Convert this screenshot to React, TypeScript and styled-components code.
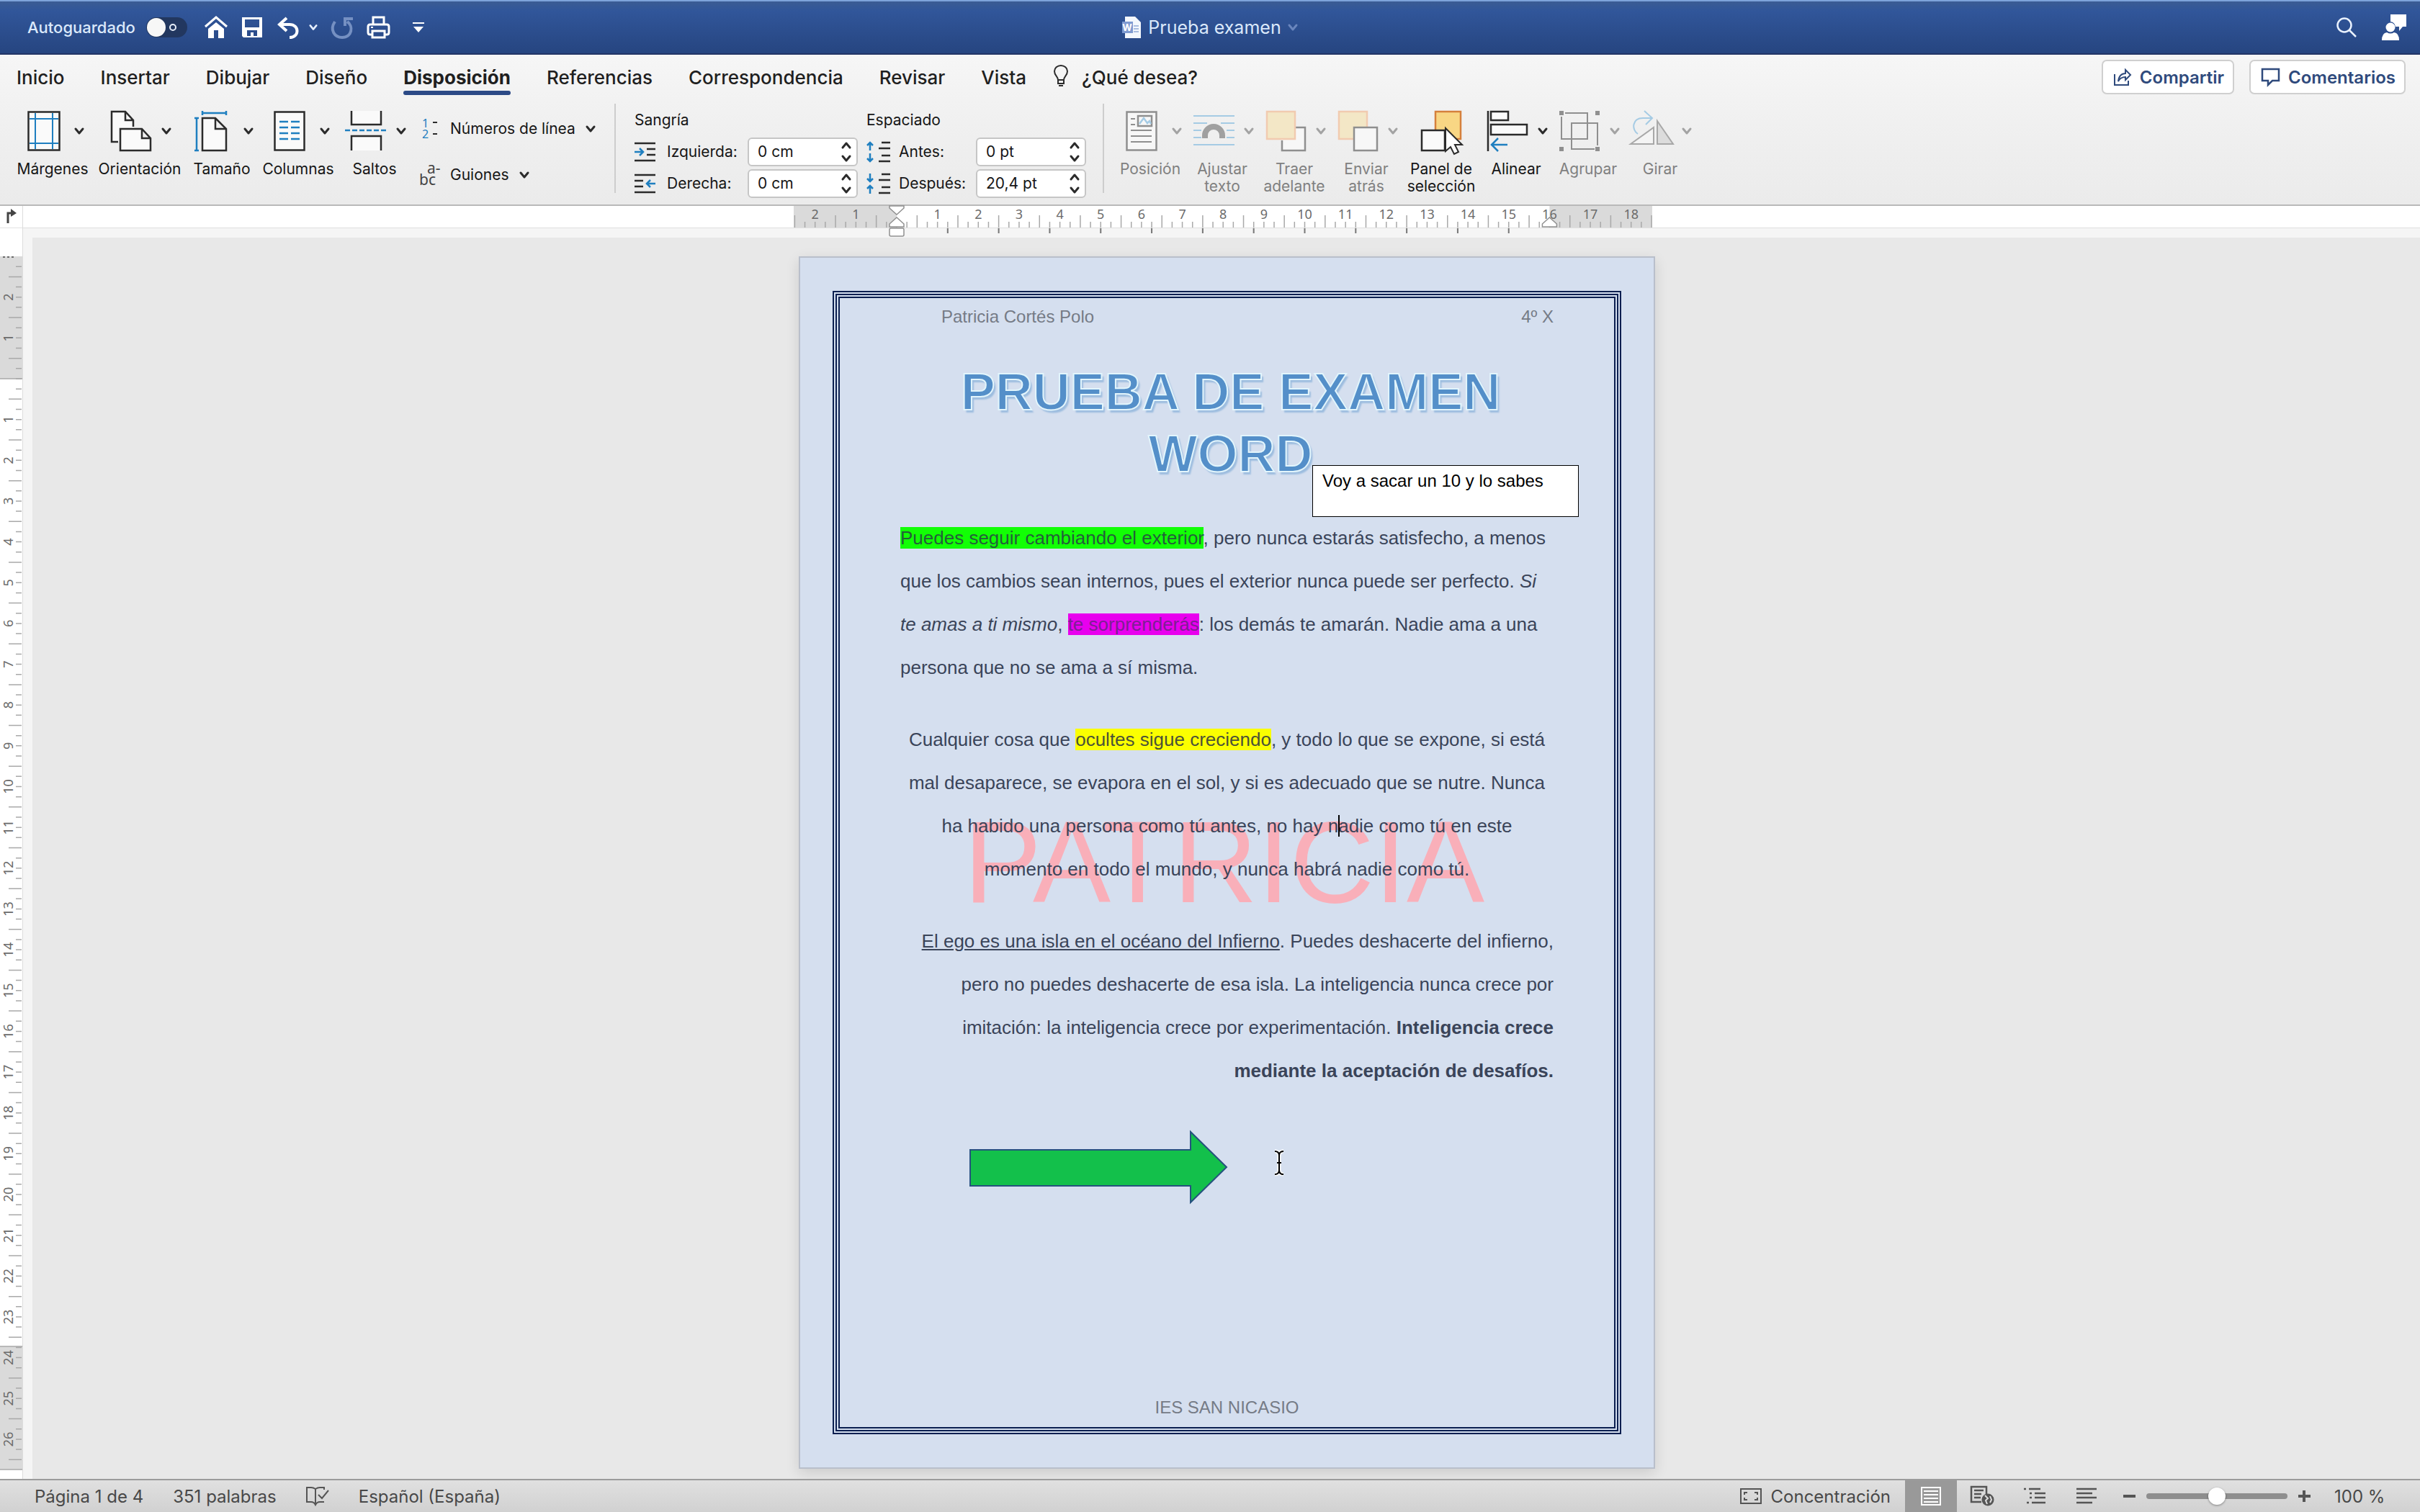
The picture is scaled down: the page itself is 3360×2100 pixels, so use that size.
import React from "react";
import styled, { createGlobalStyle, css } from "styled-components";

const UI = `Inter, "Noto Sans", sans-serif`;
const DOC = `"Liberation Sans", Arial, sans-serif`;
const INK = "#2b2b2b";
const BLUE = "#1f7fc0";
const DIM = "#8f8f8f";
const DIM_BLUE = "#a5cbe4";

const GlobalStyle = createGlobalStyle`
  *, *::before, *::after { box-sizing: border-box; }
  body { margin: 0; background: #e8e8e8; font-family: ${UI}; }
  button, input { font: inherit; color: inherit; }
  button { border: 0; padding: 0; background: none; white-space: nowrap; }
  svg { display: block; flex: none; overflow: visible; }
  h1, h2, p { margin: 0; }
`;

const Window = styled.div`
  display: flex;
  flex-direction: column;
  height: 100vh;
  overflow: hidden;
`;

/* ---------- Title bar ---------- */

const TitleBar = styled.header`
  flex: none;
  display: grid;
  grid-template-columns: 1fr auto 1fr;
  align-items: center;
  height: 76px;
  padding: 0 18px;
  color: #dbe9fb;
  background: linear-gradient(#3b5c93, #31569a 18%, #264580);
  border-top: 2px solid #7da3da;
  border-bottom: 2px solid #233565;
`;

const QuickTools = styled.div`
  display: flex;
  align-items: center;
  gap: 18px;
  padding-left: 20px;
`;

const AutoSave = styled.label`
  display: flex;
  align-items: center;
  gap: 15px;
  margin-right: 6px;
  font-size: 22px;
  line-height: 28px;
  font-weight: 500;
`;

const Switch = styled.input`
  appearance: none;
  position: relative;
  width: 57px;
  height: 28px;
  margin: 0;
  border-radius: 14px;
  background: #22375f;
  &::before {
    content: "";
    position: absolute;
    left: 1px;
    top: 1px;
    width: 26px;
    height: 26px;
    border-radius: 50%;
    background: #f7f7f7;
  }
  &::after {
    content: "";
    position: absolute;
    left: 32px;
    top: 9px;
    width: 10px;
    height: 10px;
    border: 2px solid #e6edf8;
    border-radius: 50%;
  }
`;

const UndoPair = styled.div`
  display: flex;
  align-items: center;
  gap: 13px;
`;

const DocName = styled.button`
  display: flex;
  align-items: center;
  gap: 9px;
  font-size: 25px;
  line-height: 32px;
`;

const TitleRight = styled.div`
  display: flex;
  align-items: center;
  justify-content: flex-end;
  gap: 34px;
`;

/* ---------- Ribbon ---------- */

const Ribbon = styled.section`
  flex: none;
  background: linear-gradient(#f6f6f6, #f0f0f0 45%, #ebebeb);
  border-bottom: 2px solid #b9b9b9;
`;

const TabRow = styled.nav`
  display: flex;
  align-items: center;
  gap: 50px;
  height: 62px;
  padding: 0 20px 0 23px;
`;

const Tab = styled.button<{ $active?: boolean }>`
  position: relative;
  height: 62px;
  font-size: 26px;
  font-weight: ${(p) => (p.$active ? 700 : 500)};
  color: #1f1f1f;
  ${(p) =>
    p.$active &&
    css`
      &::after {
        content: "";
        position: absolute;
        left: 0;
        right: 0;
        bottom: 6px;
        height: 6px;
        border-radius: 3px;
        background: #2c4a86;
      }
    `}
`;

const TellMe = styled(Tab)`
  display: flex;
  align-items: center;
  gap: 19px;
  margin-left: -12px;
`;

const TabActions = styled.div`
  display: flex;
  gap: 21px;
  margin-left: auto;
`;

const ActionButton = styled.button`
  display: flex;
  align-items: center;
  gap: 12px;
  height: 48px;
  padding: 0 12px 0 15px;
  border: 2px solid #cfcfcf;
  border-radius: 7px;
  background: #fff;
  color: #2f4a7c;
  font-size: 24px;
  font-weight: 600;
`;

const ToolRow = styled.div`
  display: flex;
  align-items: flex-start;
  height: 146px;
  padding-left: 13px;
`;

const BigTool = styled.button<{ $w: number; $dim?: boolean }>`
  display: flex;
  flex-direction: column;
  align-items: center;
  width: ${(p) => p.$w}px;
  margin-top: 16px;
  font-size: 21px;
  line-height: 24px;
  color: ${(p) => (p.$dim ? "#808080" : "#161616")};
`;

const BigIcon = styled.span<{ $menu?: boolean }>`
  display: grid;
  grid-template-columns: ${(p) => (p.$menu ? "60px 14px" : "60px")};
  column-gap: 12px;
  align-items: center;
  justify-items: center;
  height: 56px;
  margin-bottom: 13px;
  padding-left: 2px;
`;

const SmallTools = styled.div`
  display: flex;
  flex-direction: column;
  align-items: flex-start;
  gap: 36px;
  width: 280px;
  padding: 27px 0 0 9px;
`;

const SmallTool = styled.button`
  display: flex;
  align-items: center;
  gap: 14px;
  font-size: 21px;
  line-height: 28px;
  color: #161616;
`;

const Separator = styled.div`
  width: 2px;
  height: 124px;
  margin-top: 6px;
  background: #cdcdcd;
`;

const Measures = styled.div`
  display: flex;
  gap: 12px;
  padding: 17px 23px 0 26px;
  font-size: 21px;
  line-height: 24px;
  color: #161616;
`;

const MeasureGroup = styled.fieldset`
  margin: 0;
  padding: 0;
  border: 0;
  min-width: 0;
`;

const MeasureTitle = styled.legend`
  padding: 0;
  margin-bottom: 12px;
`;

const MeasureRow = styled.div<{ $label: number }>`
  display: grid;
  grid-template-columns: 29px ${(p) => p.$label}px 153px;
  column-gap: 16px;
  align-items: center;
  margin-bottom: 4px;
`;

const Spin = styled.div`
  display: flex;
  height: 40px;
  border: 2px solid #c6c6c6;
  border-radius: 6px;
  background: #fff;
`;

const SpinInput = styled.input`
  flex: 1;
  min-width: 0;
  padding: 0 0 0 12px;
  border: 0;
  background: none;
  outline: 0;
`;

const SpinButtons = styled.div`
  display: flex;
  flex-direction: column;
  width: 21px;
  button {
    flex: 1;
    display: flex;
    align-items: center;
  }
`;

const Arrange = styled.div`
  display: flex;
  align-items: flex-start;
  padding-left: 14px;
`;

/* ---------- Workspace ---------- */

const Workspace = styled.main`
  flex: 1;
  display: flex;
  min-height: 0;
`;

const RulerColumn = styled.div`
  flex: none;
  display: flex;
  flex-direction: column;
  width: 32px;
  background: #fff;
  border-right: 1px solid #dcdcdc;
`;

const Corner = styled.div`
  flex: none;
  display: flex;
  justify-content: center;
  height: 31px;
  padding-top: 4px;
  border-bottom: 1px solid #e2e2e2;
`;

const SideRuler = styled.svg`
  flex: 1;
  width: 31px;
  min-height: 0;
  overflow: hidden;
`;

const Stage = styled.div`
  flex: 1;
  display: flex;
  flex-direction: column;
  min-width: 0;
`;

const TopRuler = styled.div`
  flex: none;
  display: flex;
  justify-content: center;
  height: 44px;
  padding-left: 4px;
  background: linear-gradient(#fff 30px, #e0e0e0 30px, #e0e0e0 31px, #f5f5f5 31px);
`;

const Canvas = styled.div`
  flex: 1;
  display: flex;
  justify-content: center;
  align-items: flex-start;
  min-height: 0;
  padding: 26px 0 0 2px;
  overflow: hidden;
  border-left: 13px solid #f5f5f5;
  background: #e8e8e8;
`;

const Page = styled.article`
  position: relative;
  display: flex;
  flex: none;
  width: 1189px;
  min-height: 1684px;
  padding: 46px 45px;
  border: 2px solid #b9bfcb;
  background: #d5dfef;
  box-shadow: 0 6px 18px rgba(0, 0, 0, 0.12);
  font-family: ${DOC};
`;

const Frame = styled.div`
  flex: 1;
  display: flex;
  flex-direction: column;
  padding: 20px 92px 21px;
  border: 2px solid #0b1f50;
  box-shadow: inset 0 0 0 2px #d5dfef, inset 0 0 0 4px #0b1f50, inset 0 0 0 6px #d5dfef,
    inset 0 0 0 8px #0b1f50;
`;

const RunningHead = styled.div`
  display: flex;
  justify-content: space-between;
  padding-left: 57px;
  font-size: 24px;
  line-height: 28px;
  color: #757b86;
`;

const RunningFoot = styled(RunningHead)`
  justify-content: center;
  margin-top: auto;
  padding-left: 0;
`;

const WordArt = styled.h1`
  margin: 47px 0 44px;
  padding-left: 10px;
  text-align: center;
  font-size: 72px;
  line-height: 86px;
  font-weight: 700;
  color: #548fc9;
  -webkit-text-stroke: 2px #e2f5fc;
  text-shadow: 3px 4px 2px #9dbddf;
`;

const Copy = styled.div`
  position: relative;
  display: flex;
  flex-direction: column;
  gap: 40px;
  font-size: 26px;
  line-height: 60px;
  color: #3a4459;
`;

const Paragraph = styled.p<{ $align: "left" | "center" | "right" }>`
  position: relative;
  text-align: ${(p) => p.$align};
`;

const Mark = styled.mark<{ $bg: string; $ink: string }>`
  background: ${(p) => p.$bg};
  color: ${(p) => p.$ink};
`;

const Caret = styled.span`
  position: relative;
  &::before {
    content: "";
    position: absolute;
    left: 0;
    top: 0;
    width: 2px;
    height: 30px;
    background: #000;
  }
`;

const Watermark = styled.div`
  position: absolute;
  left: 0;
  right: 0;
  top: 380px;
  display: flex;
  justify-content: center;
  padding-right: 8px;
  font-size: 162px;
  line-height: 200px;
  color: #f9afb9;
`;

const Note = styled.aside`
  position: absolute;
  left: 711px;
  top: 288px;
  width: 370px;
  height: 72px;
  padding: 6px 13px;
  border: 1px solid #000;
  background: #fff;
  color: #000;
  font-size: 24px;
  line-height: 30px;
`;

const Arrow = styled.svg`
  margin: 52px 0 0 96px;
`;

const Pointer = styled.svg`
  position: absolute;
  left: 657px;
  top: 1240px;
`;

/* ---------- Status bar ---------- */

const StatusBar = styled.footer`
  flex: none;
  display: flex;
  align-items: stretch;
  justify-content: space-between;
  height: 46px;
  padding: 0 48px;
  border-top: 2px solid #9b9b9b;
  background: linear-gradient(#e0e0e0, #d1d1d1);
  color: #484848;
  font-size: 24px;
`;

const StatusLeft = styled.div`
  display: flex;
  align-items: center;
  gap: 41px;
`;

const StatusRight = styled.div`
  display: flex;
  align-items: stretch;
`;

const Focus = styled.button`
  display: flex;
  align-items: center;
  gap: 13px;
  margin-right: 20px;
`;

const ViewButton = styled.button<{ $active?: boolean }>`
  display: flex;
  align-items: center;
  justify-content: center;
  width: 72px;
  background: ${(p) => (p.$active ? "#999" : "none")};
`;

const Zoom = styled.div`
  display: flex;
  align-items: center;
  gap: 15px;
  padding-left: 15px;
`;

const ZoomRange = styled.input`
  appearance: none;
  width: 196px;
  height: 8px;
  margin: 0;
  border-radius: 4px;
  background: #8e8e8e;
  &::-webkit-slider-thumb {
    appearance: none;
    width: 24px;
    height: 24px;
    border-radius: 50%;
    background: #fff;
    box-shadow: 0 1px 3px rgba(0, 0, 0, 0.4);
  }
`;

const ZoomValue = styled.output`
  width: 71px;
  margin-left: 18px;
  white-space: nowrap;
`;

/* ---------- Icons ---------- */

const Chevron = ({ color = INK, up = false, w = 14 }: { color?: string; up?: boolean; w?: number }) => (
  <svg width={w} height="10" viewBox="0 0 14 10" fill="none" stroke={color} strokeWidth="3" strokeLinecap="round" strokeLinejoin="round">
    <path d={up ? "M2 8L7 2l5 6" : "M2 2l5 6 5-6"} />
  </svg>
);

const Draw = ({ w, h = 56, color = INK, sw = 2.5, children }: { w: number; h?: number; color?: string; sw?: number; children: React.ReactNode }) => (
  <svg width={w} height={h} viewBox={`0 0 ${w} ${h}`} fill="none" stroke={color} strokeWidth={sw}>
    {children}
  </svg>
);

const MarginsIcon = () => (
  <Draw w={46}>
    <rect x="1.5" y="1.5" width="43" height="53" fill="#fafafa" />
    <path stroke={BLUE} strokeWidth="2" d="M11 3v50M35 3v50M3 11h40M3 45h40" />
  </Draw>
);
const OrientationIcon = () => (
  <Draw w={56}>
    <path fill="#fafafa" d="M9 43H1V1h19l11 12v12H13v18z" stroke="none" />
    <path d="M10 43H1V1h19l11 12v9M20 1v12h11" />
    <path fill="#fafafa" d="M13 25h30l12 13v17H13zM43 25v13h12" />
  </Draw>
);
const SizeIcon = () => (
  <Draw w={53}>
    <path stroke={BLUE} d="M11 3h33M11 0v6M44 0v6M3 10v45M0 10h6M0 55h6" />
    <path fill="#fafafa" d="M11 10h18l15 15v30H11zM29 10v15h15" />
  </Draw>
);
const ColumnsIcon = () => (
  <Draw w={44}>
    <rect x="1.5" y="1.5" width="41" height="53" fill="#fafafa" />
    <path stroke={BLUE} d="M8 15h12M24 15h12M8 23h12M24 23h12M8 31h12M24 31h12M8 39h12M24 39h12" />
  </Draw>
);
const BreaksIcon = () => (
  <Draw w={58}>
    <path fill="#fafafa" d="M9 0v19h41V0M9 55V35h41v20" />
    <path stroke={BLUE} strokeDasharray="7 3" d="M0 27h58" />
  </Draw>
);
const LineNumbersIcon = () => (
  <svg width="29" height="28" viewBox="0 0 29 28">
    <text x="4" y="12" fontSize="16" fontFamily="Noto Sans, sans-serif" fill={BLUE}>1</text>
    <text x="4" y="27" fontSize="16" fontFamily="Noto Sans, sans-serif" fill={BLUE}>2</text>
    <path d="M19 5h6M19 21h6" stroke={INK} strokeWidth="2" />
  </svg>
);
const HyphenIcon = () => (
  <svg width="29" height="28" viewBox="0 0 29 28" fontSize="21" fontFamily="Noto Sans, sans-serif" fill="#444">
    <text x="11" y="12">a-</text>
    <text x="0" y="28">bc</text>
  </svg>
);
const IndentIcon = ({ right }: { right?: boolean }) => (
  <Draw w={29} h={26}>
    <path d={right ? "M0 1h29M0 9h12M0 17h12M0 25h29" : "M0 1h29M17 9h12M17 17h12M0 25h29"} />
    <path stroke={BLUE} d={right ? "M29 13H17M22 8l-5 5 5 5" : "M0 13h12M7 8l5 5-5 5"} />
  </Draw>
);
const SpacingIcon = ({ after }: { after?: boolean }) => (
  <Draw w={33} h={28}>
    <path d="M21 1h12M17 9h16M21 19h12M17 27h16" />
    <path stroke={BLUE} d={after ? "M5 0v11M1 7l4 4 4-4M5 28V17M1 21l4-4 4 4" : "M5 12V1M1 5l4-4 4 4M5 16v11M1 23l4 4 4-4"} />
  </Draw>
);
const PositionIcon = () => (
  <Draw w={44} color={DIM}>
    <rect x="1.5" y="1.5" width="41" height="53" fill="#f7f7f7" />
    <path strokeWidth="2" d="M7 11h6M7 19h6M7 27h29M7 35h29M7 43h29" />
    <rect x="17" y="7" width="19" height="14" />
    <path stroke={DIM_BLUE} d="M19 18l6-8 5 7 3-3 2 4" />
  </Draw>
);
const WrapIcon = () => (
  <Draw w={57} color={DIM_BLUE}>
    <path strokeWidth="2" d="M0 7h57M0 17h19M38 17h19M0 27h11M46 27h11M0 37h11M46 37h11M0 47h57" />
    <path stroke="#a0a0a0" strokeWidth="8" d="M16 38v-4a12 12 0 0 1 24 0v4" />
  </Draw>
);
const ForwardIcon = () => (
  <Draw w={55} color={DIM}>
    <path fill="#f7f7f7" d="M41 23h13v32H22V41" />
    <rect x="1" y="1" width="39" height="38" fill="#f3e7c6" stroke="#f1cbb0" />
  </Draw>
);
const BackwardIcon = () => (
  <Draw w={55} color={DIM}>
    <rect x="1" y="1" width="39" height="38" fill="#f3e7c6" stroke="#f1cbb0" />
    <rect x="22" y="23" width="32" height="32" fill="#f7f7f7" />
  </Draw>
);
const PaneIcon = () => (
  <Draw w={58}>
    <rect x="20" y="1" width="35" height="38" fill="#f8d684" stroke="#d5803c" />
    <rect x="1" y="27" width="32" height="28" fill="#fafafa" />
    <path fill="#fff" strokeWidth="2" d="M34 24v32l7-6 5 10 6-3-5-10h10z" />
  </Draw>
);
const AlignIcon = () => (
  <Draw w={56}>
    <path d="M1 0v56M5 1h24v12H5zM5 19h50v14H5z" fill="#fafafa" />
    <path stroke={BLUE} d="M28 47H6M15 38l-9 9 9 9" />
  </Draw>
);
const GroupIcon = () => (
  <Draw w={56} color={DIM} sw={2}>
    <path d="M3 8v31h36V8M8 3h31v5M17 48V17h36v31M17 48v5h32" />
    <path fill={DIM} stroke="none" d="M0 0h6v6H0zM50 0h6v6h-6zM0 50h6v6H0zM50 50h6v6h-6z" />
  </Draw>
);
const RotateIcon = () => (
  <Draw w={61} color="#a8a8a8" sw={2}>
    <path d="M1 46L33 23v23z" fill="#f4f4f4" />
    <path d="M38 14l22 32H38z" fill="#dcdcdc" />
    <path stroke={DIM_BLUE} d="M11 32C2 26 3 10 18 10h13M20 0l11 10-9 9" />
  </Draw>
);

const HomeIcon = () => (
  <svg width="32" height="32" viewBox="0 0 32 32" fill="#fff">
    <path d="M1 15L16 2l15 13" fill="none" stroke="#fff" strokeWidth="3" />
    <path d="M5 18L16 9l11 9v13h-8V20h-6v11H5z" />
  </svg>
);
const SaveIcon = () => (
  <svg width="32" height="32" viewBox="0 0 32 32">
    <path fill="#fff" fillRule="evenodd" d="M2 2h28v28H4l-2-2zM6 5v11h20V5zM9 20v8h5v-5h4v5h5v-8z" />
  </svg>
);
const UndoIcon = () => (
  <svg width="32" height="32" viewBox="0 0 32 32" fill="none" stroke="#fff" strokeWidth="4">
    <path d="M14 3L4 12l10 9M5 12h13c14 0 14 18 0 18" />
  </svg>
);
const RedoIcon = () => (
  <svg width="32" height="32" viewBox="0 0 32 32" fill="none" stroke="#7590c2" strokeWidth="4">
    <path d="M6 8c-8 12 0 22 10 22 14 0 16-16 7-22M20 14V4h11" />
  </svg>
);
const PrintIcon = () => (
  <svg width="33" height="32" viewBox="0 0 33 32" fill="none" stroke="#fff" strokeWidth="3">
    <path d="M9 12V2h15v10M8 26H5q-3 0-3-3v-8q0-3 3-3h23q3 0 3 3v8q0 3-3 3h-3M8 21h17v9H8z" />
    <path d="M6 16h3" strokeWidth="2" />
  </svg>
);
const CustomizeIcon = () => (
  <svg width="16" height="16" viewBox="0 0 16 16" fill="#fff">
    <path d="M0 1h16v2H0zM1 7h14l-7 8z" />
  </svg>
);
const WordFileIcon = () => (
  <svg width="27" height="30" viewBox="0 0 27 30">
    <path fill="#f4f8fd" d="M4 0h14l8 8v22H4z" />
    <path stroke="#a9bde0" strokeWidth="2" d="M16 13h7M16 17h7M16 21h7" />
    <rect x="0" y="7" width="15" height="16" fill="#7f9bd1" />
    <text x="7" y="20" textAnchor="middle" fontSize="13" fontWeight="700" fontFamily="Inter, sans-serif" fill="#fff">W</text>
  </svg>
);
const SearchIcon = () => (
  <svg width="28" height="28" viewBox="0 0 28 28" fill="none" stroke="#eaf2ff" strokeWidth="2.5">
    <circle cx="11" cy="11" r="9.5" />
    <path d="M18 18l9 9" />
  </svg>
);
const PersonIcon = () => (
  <svg width="36" height="36" viewBox="0 0 36 36" fill="#fff">
    <path d="M13 0h22v17h-5l-5 6v-6h-5q-1-6-7-7z" />
    <circle cx="13" cy="18" r="6.5" />
    <path d="M1 36q0-10 7-11 5 3 10 0 7 1 7 11z" />
  </svg>
);
const BulbIcon = () => (
  <svg width="20" height="34" viewBox="0 0 20 34" fill="none" stroke={INK} strokeWidth="2">
    <path d="M6 21c0-5-5-6-5-12a9 8 0 0 1 18 0c0 6-5 7-5 12zM6 21v5h8v-5M7 29h6" />
  </svg>
);
const ShareIcon = () => (
  <Draw w={24} h={24} color="#2f4a7c">
    <path strokeWidth="2" d="M1 8v15h19v-6M6 18c1-8 5-11 10-11V2l7 7-7 7v-4c-5 0-8 2-10 6z" />
  </Draw>
);
const CommentIcon = () => (
  <Draw w={25} h={24} color="#2f4a7c">
    <path d="M1 1h23v16h-9l-6 6v-6H1z" />
  </Draw>
);
const ProofIcon = () => (
  <Draw w={32} h={27} color="#555" sw={2}>
    <path d="M13 3v20M13 3q-3-2-6-2H1v20h6q4 0 6 4 2-4 6-4h6M13 3q3-2 6-2h6v3M17 11l5 5 9-11" />
  </Draw>
);
const FocusIcon = () => (
  <Draw w={30} h={22} color="#555">
    <path d="M1 1h28v20H1zM6 9V6h4M20 6h4v3M24 13v3h-4M10 16H6v-3" strokeWidth="2" />
  </Draw>
);
const PrintViewIcon = () => (
  <Draw w={28} h={26} color="#fff">
    <path d="M1 1h26v24H1zM4 6h20M4 11h20M4 16h20M4 21h20" strokeWidth="2" />
  </Draw>
);
const WebViewIcon = () => (
  <Draw w={34} h={28} color="#555">
    <path strokeWidth="2.5" d="M15 22H1V1h21v10M5 6h13M5 11h10M5 16h9" />
    <circle cx="24" cy="19" r="8.5" fill="#555" stroke="none" />
    <path stroke="#ddd" strokeWidth="2" d="M20 13l4 4-3 3 2 5M27 14l2 5-2 4" />
  </Draw>
);
const OutlineIcon = () => (
  <Draw w={30} h={24} color="#555">
    <path d="M0 2h3M7 2h16M8 8h3M15 8h15M8 14h3M15 14h15M4 21h3M11 21h19" />
  </Draw>
);
const DraftIcon = () => (
  <Draw w={28} h={24} color="#555">
    <path d="M0 2h28M0 8h22M0 14h28M0 21h22" />
  </Draw>
);

/* ---------- Rulers ---------- */

const CM = 56.65;
const range = (from: number, to: number) => Array.from({ length: to - from + 1 }, (_, i) => from + i);

const HorizontalRuler = () => {
  const zero = 143;
  const end = zero + 16 * CM;
  return (
    <svg width="1192" height="44" fontFamily="Noto Sans, sans-serif" fontSize="18" fill="#6b6b6b" textAnchor="middle">
      <rect x="0" y="0" width={zero} height="30" fill="#dadada" />
      <rect x={end} y="0" width={1192 - end} height="30" fill="#dadada" />
      <path
        stroke="#a9a9a9"
        strokeWidth="1.5"
        d={range(-10, 74)
          .map((q) => `M${zero + (q * CM) / 4} ${Math.abs(q) % 4 === 2 ? 13 : 22}V30`)
          .join("")}
      />
      <path stroke="#777" strokeWidth="2" d={range(1, 12).map((n) => `M${zero + n * 1.25 * CM} 31v7`).join("")} />
      {range(-2, 18)
        .filter((n) => n !== 0)
        .map((n) => (
          <text key={n} x={zero + n * CM} y="18">
            {Math.abs(n)}
          </text>
        ))}
      <g fill="#fff" stroke="#909090" strokeWidth="1.5">
        <path d={`M${zero - 10} 0h20v3l-10 9-10-9z`} />
        <path d={`M${zero - 10} 29v-4l10-9 10 9v4z`} />
        <rect x={zero - 10} y="31" width="20" height="11" rx="2" />
        <path d={`M${end - 10} 29v-4l10-9 10 9v4z`} />
      </g>
    </svg>
  );
};

const VerticalRuler = () => {
  const zero = 209;
  return (
    <SideRuler fontFamily="Noto Sans, sans-serif" fontSize="18" fill="#6b6b6b" textAnchor="middle">
      <rect x="0" y="39" width="31" height="170" fill="#dadada" />
      <rect x="0" y="1553" width="31" height="171" fill="#dadada" />
      <path stroke="#a9a9a9" strokeWidth="1.5" d="M0 209h31M0 1553h31M0 1724h31" />
      <path
        stroke="#a9a9a9"
        strokeWidth="1.5"
        d={range(-11, 106)
          .map((q) => `M${Math.abs(q) % 4 === 2 ? 12 : 22} ${zero + (q * CM) / 4}H30`)
          .join("")}
      />
      {range(-2, 26)
        .filter((n) => n !== 0)
        .map((n) => (
          <text key={n} transform={`translate(18 ${zero + n * CM}) rotate(-90)`}>
            {Math.abs(n)}
          </text>
        ))}
      <path d="M4 40h15" stroke="#6b6b6b" strokeWidth="2" strokeDasharray="3 3" />
    </SideRuler>
  );
};

/* ---------- Pieces ---------- */

type ToolProps = { icon: React.ReactNode; lines: string[]; w: number; dim?: boolean; menu?: boolean };

const Tool = ({ icon, lines, w, dim, menu = true }: ToolProps) => (
  <BigTool $w={w} $dim={dim}>
    <BigIcon $menu={menu}>
      {icon}
      {menu && <Chevron color={dim ? "#a3a3a3" : INK} />}
    </BigIcon>
    {lines.map((line) => (
      <span key={line}>{line}</span>
    ))}
  </BigTool>
);

type FieldProps = { id: string; icon: React.ReactNode; label: string; value: string; labelWidth: number };

const Field = ({ id, icon, label, value, labelWidth }: FieldProps) => (
  <MeasureRow $label={labelWidth}>
    {icon}
    <label htmlFor={id}>{label}</label>
    <Spin>
      <SpinInput id={id} defaultValue={value} />
      <SpinButtons>
        <button aria-label="Aumentar"><Chevron up /></button>
        <button aria-label="Reducir"><Chevron /></button>
      </SpinButtons>
    </Spin>
  </MeasureRow>
);

const leftTools: ToolProps[] = [
  { icon: <MarginsIcon />, lines: ["Márgenes"], w: 120 },
  { icon: <OrientationIcon />, lines: ["Orientación"], w: 122 },
  { icon: <SizeIcon />, lines: ["Tamaño"], w: 106 },
  { icon: <ColumnsIcon />, lines: ["Columnas"], w: 106 },
  { icon: <BreaksIcon />, lines: ["Saltos"], w: 106 },
];

const arrangeTools: ToolProps[] = [
  { icon: <PositionIcon />, lines: ["Posición"], w: 100, dim: true },
  { icon: <WrapIcon />, lines: ["Ajustar", "texto"], w: 100, dim: true },
  { icon: <ForwardIcon />, lines: ["Traer", "adelante"], w: 100, dim: true },
  { icon: <BackwardIcon />, lines: ["Enviar", "atrás"], w: 100, dim: true },
  { icon: <PaneIcon />, lines: ["Panel de", "selección"], w: 108, menu: false },
  { icon: <AlignIcon />, lines: ["Alinear"], w: 100 },
  { icon: <GroupIcon />, lines: ["Agrupar"], w: 100, dim: true },
  { icon: <RotateIcon />, lines: ["Girar"], w: 100, dim: true },
];

const tabs = ["Inicio", "Insertar", "Dibujar", "Diseño", "Disposición", "Referencias", "Correspondencia", "Revisar", "Vista"];

export default function App() {
  return (
    <Window>
      <GlobalStyle />
      <TitleBar>
        <QuickTools>
          <AutoSave>
            Autoguardado
            <Switch type="checkbox" role="switch" />
          </AutoSave>
          <button aria-label="Inicio"><HomeIcon /></button>
          <button aria-label="Guardar"><SaveIcon /></button>
          <UndoPair>
            <button aria-label="Deshacer"><UndoIcon /></button>
            <button aria-label="Opciones de deshacer"><Chevron color="#e6efff" w={12} /></button>
          </UndoPair>
          <button aria-label="Rehacer"><RedoIcon /></button>
          <button aria-label="Imprimir"><PrintIcon /></button>
          <UndoPair>
            <span />
            <button aria-label="Personalizar"><CustomizeIcon /></button>
          </UndoPair>
        </QuickTools>
        <DocName>
          <WordFileIcon />
          Prueba examen
          <Chevron color="#6a86bd" />
        </DocName>
        <TitleRight>
          <button aria-label="Buscar"><SearchIcon /></button>
          <button aria-label="Cuenta"><PersonIcon /></button>
        </TitleRight>
      </TitleBar>

      <Ribbon>
        <TabRow>
          {tabs.map((t) => (
            <Tab key={t} $active={t === "Disposición"}>{t}</Tab>
          ))}
          <TellMe>
            <BulbIcon />
            ¿Qué desea?
          </TellMe>
          <TabActions>
            <ActionButton><ShareIcon />Compartir</ActionButton>
            <ActionButton><CommentIcon />Comentarios</ActionButton>
          </TabActions>
        </TabRow>
        <ToolRow>
          {leftTools.map((t) => (
            <Tool key={t.lines[0]} {...t} />
          ))}
          <SmallTools>
            <SmallTool><LineNumbersIcon />Números de línea<Chevron /></SmallTool>
            <SmallTool><HyphenIcon />Guiones<Chevron /></SmallTool>
          </SmallTools>
          <Separator />
          <Measures>
            <MeasureGroup>
              <MeasureTitle>Sangría</MeasureTitle>
              <Field id="left" icon={<IndentIcon />} label="Izquierda:" value="0 cm" labelWidth={96} />
              <Field id="right" icon={<IndentIcon right />} label="Derecha:" value="0 cm" labelWidth={96} />
            </MeasureGroup>
            <MeasureGroup>
              <MeasureTitle>Espaciado</MeasureTitle>
              <Field id="before" icon={<SpacingIcon />} label="Antes:" value="0 pt" labelWidth={91} />
              <Field id="after" icon={<SpacingIcon after />} label="Después:" value="20,4 pt" labelWidth={91} />
            </MeasureGroup>
          </Measures>
          <Separator />
          <Arrange>
            {arrangeTools.map((t) => (
              <Tool key={t.lines[0]} {...t} />
            ))}
          </Arrange>
        </ToolRow>
      </Ribbon>

      <Workspace>
        <RulerColumn>
          <Corner>
            <svg width="14" height="20" viewBox="0 0 14 20">
              <path d="M2 20V6h7" fill="none" stroke="#444" strokeWidth="3" />
              <path d="M6 0l8 6-8 5z" fill="#444" />
            </svg>
          </Corner>
          <VerticalRuler />
        </RulerColumn>
        <Stage>
          <TopRuler>
            <HorizontalRuler />
          </TopRuler>
          <Canvas>
            <Page>
              <Frame>
                <RunningHead>
                  <span>Patricia Cortés Polo</span>
                  <span>4º X</span>
                </RunningHead>
                <WordArt>PRUEBA DE EXAMEN WORD</WordArt>
                <Copy>
                  <Watermark aria-hidden="true">PATRICIA</Watermark>
                  <Paragraph $align="left">
                    <Mark $bg="#12ff05" $ink="#23603a">Puedes seguir cambiando el exterior</Mark>, pero nunca
                    estarás satisfecho, a menos que los cambios sean internos, pues el exterior nunca puede ser
                    perfecto. <em>Si te amas a ti mismo</em>,{" "}
                    <Mark $bg="#e800ee" $ink="#7d1f93">te sorprenderás</Mark>: los demás te amarán. Nadie ama a una
                    persona que no se ama a sí misma.
                  </Paragraph>
                  <Paragraph $align="center">
                    Cualquier cosa que <Mark $bg="#fbff00" $ink="#4b5238">ocultes sigue creciendo</Mark>, y todo lo que
                    se expone, si está mal desaparece, se evapora en el sol, y si es adecuado que se nutre. Nunca ha
                    habido una persona como tú antes, no hay n<Caret />adie como tú en este momento en todo el mundo, y
                    nunca habrá nadie como tú.
                  </Paragraph>
                  <Paragraph $align="right">
                    <u>El ego es una isla en el océano del Infierno</u>. Puedes deshacerte del infierno, pero no puedes
                    deshacerte de esa isla. La inteligencia nunca crece por imitación: la inteligencia crece por
                    experimentación. <strong>Inteligencia crece mediante la aceptación de desafíos.</strong>
                  </Paragraph>
                </Copy>
                <Arrow width="358" height="104" viewBox="0 0 358 104">
                  <path d="M1 28h306V3l50 49-50 49V78H1z" fill="#13c04b" stroke="#26527e" strokeWidth="2" />
                </Arrow>
                <RunningFoot>IES SAN NICASIO</RunningFoot>
              </Frame>
              <Note>Voy a sacar un 10 y lo sabes</Note>
              <Pointer width="16" height="34" viewBox="0 0 16 34" fill="none" stroke="#000" strokeWidth="2">
                <path d="M2 1q6 0 6 6v20q0 6-6 6M14 1q-6 0-6 6v20q0 6 6 6M5 17h6" stroke="#fff" strokeWidth="5" />
                <path d="M2 1q6 0 6 6v20q0 6-6 6M14 1q-6 0-6 6v20q0 6 6 6M5 17h6" />
              </Pointer>
            </Page>
          </Canvas>
        </Stage>
      </Workspace>

      <StatusBar>
        <StatusLeft>
          <span>Página 1 de 4</span>
          <span>351 palabras</span>
          <button aria-label="Revisión"><ProofIcon /></button>
          <button>Español (España)</button>
        </StatusLeft>
        <StatusRight>
          <Focus><FocusIcon />Concentración</Focus>
          <ViewButton $active aria-label="Diseño de impresión"><PrintViewIcon /></ViewButton>
          <ViewButton aria-label="Diseño web"><WebViewIcon /></ViewButton>
          <ViewButton aria-label="Esquema"><OutlineIcon /></ViewButton>
          <ViewButton aria-label="Borrador"><DraftIcon /></ViewButton>
          <Zoom>
            <button aria-label="Alejar">
              <svg width="17" height="16" viewBox="0 0 17 16" stroke="#555" strokeWidth="4"><path d="M0 8h17" /></svg>
            </button>
            <ZoomRange type="range" min="0" max="100" defaultValue="50" aria-label="Zoom" />
            <button aria-label="Acercar">
              <svg width="17" height="16" viewBox="0 0 17 16" stroke="#555" strokeWidth="4"><path d="M0 8h17M8 0v16" /></svg>
            </button>
            <ZoomValue>100 %</ZoomValue>
          </Zoom>
        </StatusRight>
      </StatusBar>
    </Window>
  );
}
